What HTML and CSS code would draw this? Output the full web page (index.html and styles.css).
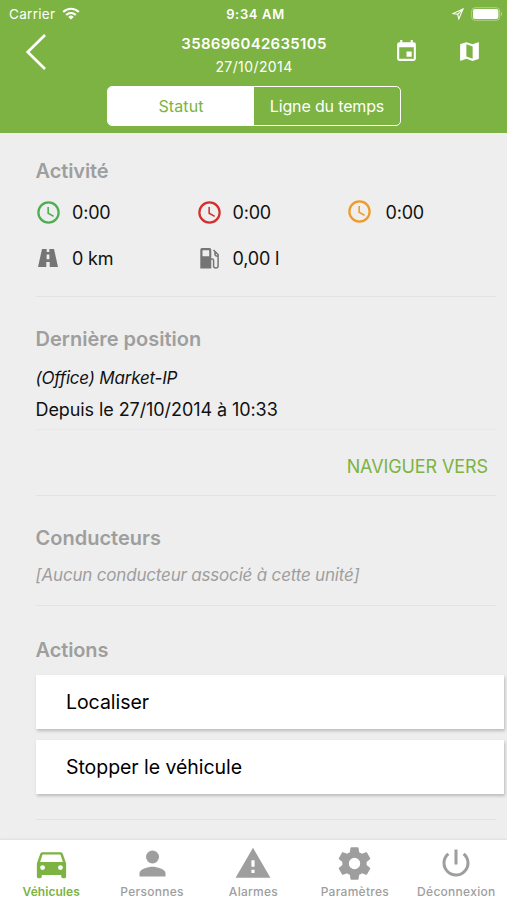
FILE: index.html
```html
<!DOCTYPE html>
<html lang="fr">
<head>
<meta charset="utf-8">
<title>Véhicule</title>
<link rel="stylesheet" href="styles.css">
</head>
<body>
<svg class="defs" width="0" height="0">
  <symbol id="clock" viewBox="0 0 24 24"><path d="M12 2a10 10 0 1 0 0 20 10 10 0 0 0 0-20zm0 18a8 8 0 1 1 0-16 8 8 0 0 1 0 16z"/><path d="M12.4 7H11v6l5.2 3 .7-1.2-4.5-2.6z"/></symbol>
</svg>
<div class="app">
  <header class="header">
    <div class="status">
      <div class="carrier"><span class="carrier-name">Carrier</span>
        <svg class="wifi" viewBox="0 0 18 13" fill="none" stroke="#fff" stroke-width="2.2"><path d="M1.2 5a11 11 0 0 1 15.6 0M4.2 8a6.8 6.8 0 0 1 9.6 0"/><path d="M9 12.6 6.3 9.9a3.8 3.8 0 0 1 5.4 0z" fill="#fff" stroke="none"/></svg>
      </div>
      <span class="time">9:34 AM</span>
      <div class="indicators">
        <svg class="locate" viewBox="0 0 12 12" fill="none" stroke="#fff" stroke-width="1.1"><path d="M11 1 1 5.6 5.7 6.300 6.800 11z"/><path d="M11 1 5.700 6.300"/></svg>
        <svg class="battery" viewBox="0 0 32 14"><rect x=".7" y=".7" width="28" height="12.6" rx="3.4" fill="none" stroke="#b0d388"/><rect x="2" y="2" width="25.400" height="10" rx="2" fill="#fff"/><path d="M30 5v4c1.6-.5 1.6-3.5 0-4z" fill="#b0d388"/></svg>
      </div>
    </div>
    <div class="nav">
      <svg class="back" viewBox="0 0 22 36" fill="none" stroke="#fff" stroke-width="2.7"><path d="M20 1 2.7 18 20 35"/></svg>
      <div class="titles"><h1 class="title">358696042635105</h1><p class="date">27/10/2014</p></div>
      <div class="tools">
        <svg class="tool" viewBox="0 0 24 24"><path d="M17 12h-5v5h5v-5zM16 1v2H8V1H6v2H5a2 2 0 0 0-2 2v14a2 2 0 0 0 2 2h14a2 2 0 0 0 2-2V5a2 2 0 0 0-2-2h-1V1h-2zm3 18H5V8h14v11z"/></svg>
        <svg class="tool" viewBox="0 0 24 24"><path d="M20.500 3l-.16.030L15 5.100 9 3 3.360 4.900c-.21.070-.36.250-.36.480V20.500c0 .280.220.500.500.500l.16-.030L9 18.900l6 2.100 5.640-1.900c.21-.070.360-.250.360-.480V3.500c0-.280-.220-.500-.500-.500zM15 19l-6-2.110V5l6 2.110V19z"/></svg>
      </div>
    </div>
    <div class="segments"><span class="segment active">Statut</span><span class="segment">Ligne du temps</span></div>
  </header>
  <main class="content">
    <section class="section activity">
      <h2>Activité</h2>
      <div class="metrics">
        <div class="metric"><svg class="clock green"><use href="#clock"/></svg><span>0:00</span></div>
        <div class="metric"><svg class="clock red"><use href="#clock"/></svg><span>0:00</span></div>
        <div class="metric late"><svg class="clock orange"><use href="#clock"/></svg><span>0:00</span></div>
        <div class="metric"><svg class="road" viewBox="0 0 20 18"><path fill-rule="evenodd" d="M4 0h4.700v3h2.600V0H16l4 18h-8.300v-5H8.300v5H0zM8.600 5.500v4.800h2.800V5.500z"/></svg><span>0 km</span></div>
        <div class="metric"><svg class="fuel" viewBox="0 0 20 21"><path fill-rule="evenodd" d="M2 0h7.500a1.800 1.800 0 0 1 1.800 1.800V20.500H.3V1.800A1.800 1.800 0 0 1 2 0zM2.500 2.300v6h6.700v-6z"/><path d="M11 11h1.300q1.300 0 1.300 1.500v5.700c0 2.300 4.500 2.300 4.500 0V6.500L13.500 2M15 3.500v3.300q0 1.200 3 1.500" fill="none" stroke="#757575" stroke-width="1.5"/></svg><span>0,00 l</span></div>
      </div>
    </section>
    <section class="section position">
      <h2 class="wide">Dernière position</h2>
      <p class="place">(Office) Market-IP</p>
      <p class="since">Depuis le 27/10/2014 à 10:33</p>
      <div class="navigate">NAVIGUER VERS</div>
    </section>
    <section class="section drivers">
      <h2 class="wide">Conducteurs</h2>
      <p class="empty">[Aucun conducteur associé à cette unité]</p>
    </section>
    <section class="section actions">
      <h2>Actions</h2>
      <div class="action">Localiser</div>
      <div class="action">Stopper le véhicule</div>
    </section>
  </main>
  <nav class="tabs">
    <div class="tab selected"><svg viewBox="0 0 24 24"><path d="M18.920 6.010C18.720 5.420 18.160 5 17.500 5h-11c-.66 0-1.210.420-1.420 1.010L3 12v8c0 .550.450 1 1 1h1c.550 0 1-.450 1-1v-1h12v1c0 .550.450 1 1 1h1c.550 0 1-.450 1-1v-8l-2.080-5.990zM6.500 16a1.500 1.500 0 1 1 0-3 1.500 1.500 0 0 1 0 3zm11 0a1.500 1.500 0 1 1 0-3 1.500 1.500 0 0 1 0 3zM5 11l1.500-4.500h11L19 11H5z"/></svg><span>Véhicules</span></div>
    <div class="tab"><svg viewBox="0 0 24 24"><circle cx="12" cy="8" r="4"/><path d="M12 14c-2.670 0-8 1.340-8 4v2h16v-2c0-2.660-5.330-4-8-4z"/></svg><span>Personnes</span></div>
    <div class="tab"><svg class="alert" viewBox="0 0 24 24"><path d="M1 21h22L12 2 1 21zm12-3h-2v-2h2v2zm0-4h-2v-4h2v4z"/></svg><span>Alarmes</span></div>
    <div class="tab"><svg viewBox="0 0 24 24"><path d="M19.430 12.980c.040-.320.070-.640.070-.980s-.030-.660-.070-.980l2.110-1.650c.190-.150.240-.420.120-.640l-2-3.460c-.120-.220-.390-.300-.610-.220l-2.490 1c-.520-.400-1.080-.730-1.690-.980l-.380-2.650C14.460 2.180 14.250 2 14 2h-4c-.250 0-.460.180-.490.420l-.380 2.650c-.610.250-1.170.590-1.690.980l-2.490-1c-.230-.090-.490 0-.610.220l-2 3.460c-.130.220-.070.490.120.640l2.110 1.650c-.040.320-.070.650-.070.980s.030.660.070.980l-2.110 1.650c-.190.150-.240.420-.120.640l2 3.460c.120.220.390.300.610.220l2.490-1c.520.400 1.080.730 1.690.980l.380 2.650c.030.240.240.420.490.420h4c.250 0 .460-.180.490-.420l.380-2.650c.610-.250 1.170-.590 1.690-.980l2.490 1c.230.090.490 0 .610-.220l2-3.460c.120-.220.070-.490-.120-.640l-2.110-1.650zM12 15.500a3.500 3.500 0 1 1 0-7 3.500 3.500 0 0 1 0 7z"/></svg><span>Paramètres</span></div>
    <div class="tab"><svg class="power" viewBox="0 0 24 24"><path d="M13 3h-2v10h2V3zm4.830 2.170l-1.420 1.420A6.920 6.920 0 0 1 19 12a7 7 0 1 1-11.420-5.420L6.170 5.170A8.930 8.930 0 0 0 3 12a9 9 0 0 0 18 0c0-2.740-1.230-5.180-3.170-6.830z"/></svg><span>Déconnexion</span></div>
  </nav>
</div>
</body>
</html>
```
FILE: styles.css
```css
* { box-sizing: border-box; }
body { margin: 0; font-family: Inter, "Liberation Sans", sans-serif; color: #111; background: #eee; }
h1, h2, p { margin: 0; }
svg { display: block; flex: none; }
span { white-space: nowrap; }
.defs { position: absolute; }
.app { width: 507px; height: 900px; display: flex; flex-direction: column; overflow: hidden; background: #eee; }
.header { height: 133px; background: #7cb342; color: #fff; flex: none; }
.status { height: 28px; display: grid; grid-template-columns: 1fr auto 1fr; align-items: center; padding: 0 7px 0 9px; font-size: 13px; }
.carrier { display: flex; align-items: center; gap: 7px; }
.carrier-name { font-size: 13.5px; letter-spacing: .3px; }
.wifi { width: 18px; height: 13px; margin-top: -1px; }
.time { font-weight: 600; letter-spacing: .65px; margin-left: 2px; }
.indicators { display: flex; justify-content: flex-end; align-items: center; gap: 7px; margin-right: -3px; margin-top: -1px; }
.locate { width: 12px; height: 12px; }
.battery { width: 32px; height: 14px; }
.nav { height: 58px; display: grid; grid-template-columns: 107px 294px 106px; }
.back { width: 22px; height: 36px; margin: 6px 0 0 25px; }
.titles { text-align: center; }
.title { font-size: 15px; line-height: 20px; font-weight: 600; letter-spacing: .3px; margin-top: 6px; }
.date { font-size: 14px; line-height: 20px; margin-top: 3px; letter-spacing: .4px; }
.tools { display: flex; gap: 38px; padding-top: 11px; margin-left: -7px; }
.tool { width: 25px; height: 25px; fill: #fff; }
.segments { width: 294px; height: 40px; margin-left: 107px; display: flex; border: 1.500px solid #fff; border-radius: 5px; overflow: hidden; }
.segment { flex: 1; display: flex; align-items: center; justify-content: center; font-size: 16px; letter-spacing: -.15px; }
.segment.active { background: #fff; color: #7cb342; letter-spacing: .1px; }
.content { flex: none; height: 707px; padding: 0 11px 0 36px; }
.section { border-bottom: 1px solid #e2e2e2; }
h2 { font-size: 20px; line-height: 24px; font-weight: 600; color: #9e9e9e; letter-spacing: -.1px; margin-left: -.5px; }
.wide { letter-spacing: 0; }
.activity { height: 164px; padding-top: 26px; }
.metrics { display: grid; grid-template-columns: 160.500px 153px 1fr; grid-template-rows: 24px 24px; row-gap: 22px; margin-top: 17px; }
.metric { display: flex; align-items: center; font-size: 18px; gap: 10px; letter-spacing: -.2px; }
.clock { width: 27px; height: 27px; margin-left: -1px; }
.late { gap: 13px; }
.late .clock { margin-left: -4px; margin-top: -2px; }
.green { fill: #4caf50; }
.red { fill: #d32f2f; }
.orange { fill: #f09a28; }
.road { width: 20px; height: 18px; margin: 0 4px 0 2px; fill: #757575; }
.fuel { width: 20px; height: 21px; margin: 0 3px 0 3px; fill: #757575; }
.position { height: 199px; padding-top: 30px; }
.place { font-size: 17px; line-height: 24px; font-style: italic; margin-top: 15px; letter-spacing: -.2px; margin-left: -.5px; }
.since { font-size: 18px; line-height: 24px; margin-top: 8px; letter-spacing: -.08px; margin-left: -.5px; }
.navigate { margin-top: 7px; padding: 25px 8px 0 0; border-top: 1px solid #e8e8e8; text-align: right; color: #7cb342; font-size: 18px; line-height: 24px; letter-spacing: -.1px; }
.drivers { height: 110px; padding-top: 30px; }
.empty { font-size: 17px; line-height: 24px; font-style: italic; color: #9e9e9e; margin-top: 13px; letter-spacing: -.19px; margin-left: -.5px; }
.actions { height: 214px; padding-top: 32px; }
.action { height: 54px; margin: 11px -8px 0 0; padding-left: 30px; display: flex; align-items: center; background: #fff; color: #000; font-size: 19.500px; letter-spacing: -.05px; box-shadow: 1px 2px 3px #bbb; }
h2 + .action { margin-top: 13px; }
.tabs { height: 60px; flex: none; display: grid; grid-template-columns: repeat(5, 1fr); background: #fff; box-shadow: 0 -1px 2px #ddd; color: #9e9e9e; }
.tab { display: flex; flex-direction: column; align-items: center; padding-top: 4px; font-size: 12px; line-height: 16px; font-weight: 500; letter-spacing: .28px; }
.tab svg { width: 39px; height: 39px; fill: #9e9e9e; }
.tab .alert { width: 38px; }
.tab .power { width: 36px; height: 36px; margin: 1px 0 2px; }
.tab span { margin-top: 1px; }
.selected { color: #7cb342; font-weight: 600; letter-spacing: .05px; padding-left: 1px; }
.tab.selected svg { fill: #7cb342; }
```
